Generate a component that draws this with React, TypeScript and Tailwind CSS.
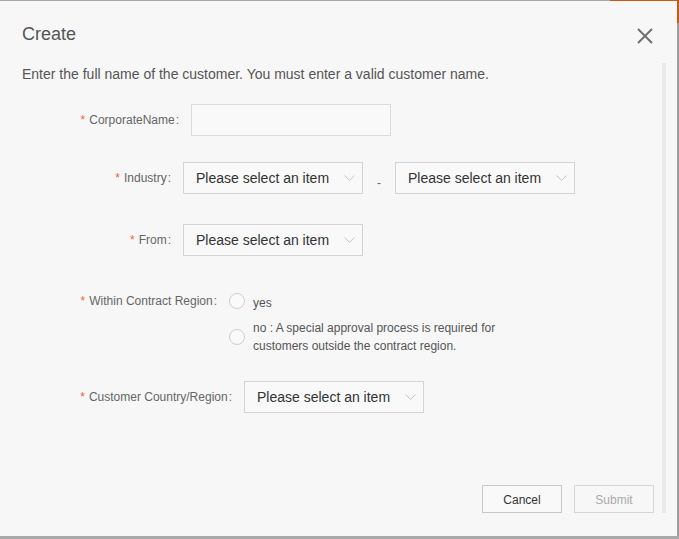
import React from "react";

const font = { fontFamily: '"Liberation Sans", Arial, sans-serif' };

function Chevron() {
    return (
        <svg width="11" height="6" viewBox="0 0 11 6" className="shrink-0">
            <path d="M0.5 0.5 L5.5 5.3 L10.5 0.5" fill="none" stroke="#c4c4c4" strokeWidth="1" />
        </svg>
    );
}

function Select() {
    return (
        <div className="w-[180px] h-[32px] border border-[#d4d4d4] bg-[#f9f9f9] flex items-center pl-[12px] pr-[7px] justify-between">
            <span className="text-[14px] text-[#333] leading-none">Please select an item</span>
            <Chevron />
        </div>
    );
}

function Label({ text, width }: { text: string; width: string }) {
    return (
        <div className={`${width} shrink-0 text-right pr-[12px] text-[12px] leading-[16px] text-[#666] whitespace-nowrap`}>
            <span className="text-[#f2613b] mr-[4px]">*</span>
            {text}
            <span className="ml-[1px]">:</span>
        </div>
    );
}

function Radio() {
    return <div className="w-[16px] h-[16px] rounded-full border border-[#cfcfcf] bg-[#fafafa] shrink-0" />;
}

export default function App() {
    return (
        <div className="w-[679px] h-[539px] bg-[#a9a9a9] flex flex-col overflow-hidden" style={font}>
            {/* strip of the page behind the dialog */}
            <div className="h-[1px] flex shrink-0">
                <div className="w-[610px] bg-[#a6a6a6]" />
                <div className="flex-1 bg-[#c55a11]" />
            </div>

            <div className="flex shrink-0">
                <div className="w-[677px] h-[535px] bg-[#f7f7f7] flex flex-col">
                    {/* header */}
                    <div className="h-[61px] shrink-0 flex items-start justify-between pl-[22px] pr-[24px] pt-[21px]">
                        <h2 className="text-[18px] leading-[24px] text-[#555]">Create</h2>
                        <svg width="16" height="16" viewBox="0 0 16 16" className="mt-[6px]">
                            <path d="M1 1 L15 15 M15 1 L1 15" stroke="#707070" strokeWidth="2" />
                        </svg>
                    </div>

                    {/* body */}
                    <div className="h-[451px] flex shrink-0">
                        <div className="flex-1 flex flex-col pl-[22px] pr-[8px]">
                            <p className="mt-[4px] text-[14px] leading-[16px] text-[#555]">
                                Enter the full name of the customer. You must enter a valid customer name.
                            </p>

                            <div className="mt-[22px] flex items-center">
                                <Label text="CorporateName" width="w-[169px]" />
                                <div className="w-[200px] h-[32px] border border-[#dcdcdc] bg-[#f9f9f9]" />
                            </div>

                            <div className="mt-[26px] flex items-center">
                                <Label text="Industry" width="w-[161px]" />
                                <Select />
                                <span className="w-[32px] text-center text-[12px] text-[#666] pt-[10px]">-</span>
                                <Select />
                            </div>

                            <div className="mt-[30px] flex items-center">
                                <Label text="From" width="w-[161px]" />
                                <Select />
                            </div>

                            <div className="mt-[37px] flex items-start">
                                <Label text="Within Contract Region" width="w-[207px]" />
                                <div className="flex flex-col">
                                    <div className="flex items-center h-[16px] gap-[8px]">
                                        <Radio />
                                        <span className="text-[12px] text-[#555] leading-[16px] pt-[3px]">yes</span>
                                    </div>
                                    <div className="mt-[9px] flex items-center gap-[8px]">
                                        <Radio />
                                        <span className="text-[12px] text-[#555] leading-[18px] pt-[1px]">
                                            no : A special approval process is required for
                                            <br />
                                            customers outside the contract region.
                                        </span>
                                    </div>
                                </div>
                            </div>

                            <div className="mt-[26px] flex items-center">
                                <Label text="Customer Country/Region" width="w-[222px]" />
                                <Select />
                            </div>

                            <div className="mt-auto flex justify-end gap-[12px]">
                                <button className="w-[80px] h-[28px] pt-[1px] border border-[#c8c8c8] bg-[#f9f9f9] text-[12px] text-[#333]">
                                    Cancel
                                </button>
                                <button className="w-[80px] h-[28px] pt-[1px] border border-[#d6d6d6] bg-[#f7f7f7] text-[12px] text-[#aaa]">
                                    Submit
                                </button>
                            </div>
                        </div>
                        {/* scrollbar track */}
                        <div className="w-[4px] mt-[1px] bg-[#e9e9e9] mr-[11px] shrink-0" />
                    </div>
                </div>
                <div className="flex-1 flex flex-col">
                    <div className="h-[22px] bg-[#c55a11]" />
                    <div className="flex-1 bg-[#9e9e9e]" />
                </div>
            </div>
        </div>
    );
}
